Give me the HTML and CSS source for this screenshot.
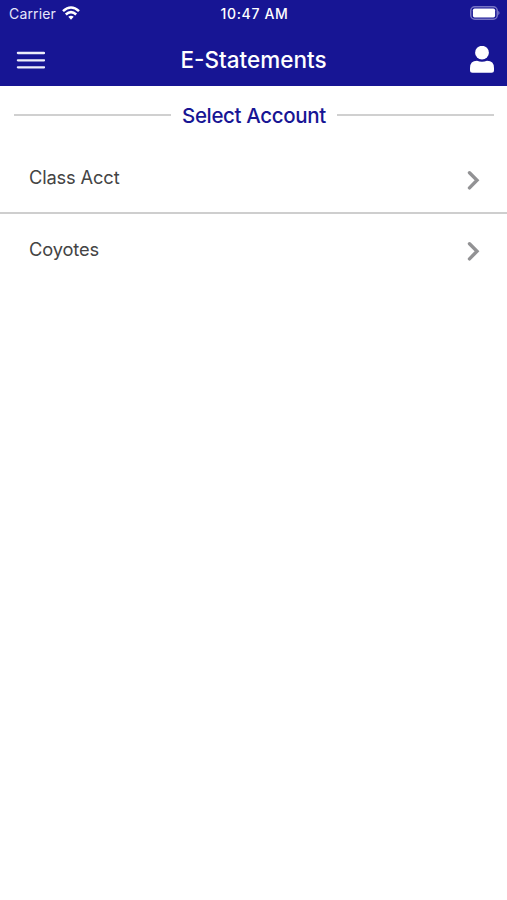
FILE: index.html
```html
<!DOCTYPE html>
<html lang="en">
<head>
<meta charset="utf-8">
<title>E-Statements</title>
<link rel="stylesheet" href="styles.css">
</head>
<body>
<header class="top">
  <div class="status">
    <div class="carrier"><span class="carrier-name">Carrier</span>
      <svg class="wifi" viewBox="0 0 18 14" width="18" height="14"><g fill="none" stroke="#fff" stroke-width="2.6"><path d="M1 5.1Q9-2.1 17 5.1"/><path d="M3.8 8.4Q9 3.9 14.2 8.4"/></g><path d="M6.3 10.8Q9 8.6 11.7 10.8L9 13.7Z" fill="#fff"/></svg>
    </div>
    <span class="time">10:47 AM</span>
    <svg class="battery" viewBox="0 0 30 14" width="30" height="14"><rect x=".75" y=".75" width="26.5" height="12.5" rx="4" fill="none" stroke="#7774c4" stroke-width="1.5"/><rect x="2.9" y="2.6" width="22.2" height="8.8" rx="1.7" fill="#fff"/><path d="M28.2 4.8q2.8 2.2 0 4.4z" fill="#7774c4"/></svg>
  </div>
  <nav class="bar">
    <svg class="menu" viewBox="0 0 29 18" width="29" height="18"><path d="M1.9 2H28M1.9 9.3H28M1.9 16.3H28" stroke="#ededfa" stroke-width="2.3" stroke-linecap="round"/></svg>
    <h1 class="title">E-Statements</h1>
    <svg class="user" viewBox="0 0 24 28" width="24" height="28"><circle cx="12" cy="6.7" r="6.9" fill="#fff"/><path d="M0 22Q0 14.8 7 14.8Q12 16.9 17 14.8Q24 14.8 24 22V24.2Q24 26.7 21.5 26.7H2.5Q0 26.7 0 24.2Z" fill="#fff"/></svg>
  </nav>
</header>
<main>
  <div class="section"><h2 class="section-title">Select Account</h2></div>
  <div class="row"><span class="name">Class Acct</span><svg class="chevron" viewBox="0 0 14 20" width="14" height="20"><path d="M2.5 2.7L10 10.3L2.5 17.9" fill="none" stroke="#929294" stroke-width="3.4" stroke-linecap="round"/></svg></div>
  <div class="row"><span class="name">Coyotes</span><svg class="chevron" viewBox="0 0 14 20" width="14" height="20"><path d="M2.5 2.7L10 10.3L2.5 17.9" fill="none" stroke="#929294" stroke-width="3.4" stroke-linecap="round"/></svg></div>
</main>
</body>
</html>
```
FILE: styles.css
```css
* { box-sizing: border-box; }
body { margin: 0; background: #fff; font-family: Inter, "Liberation Sans", sans-serif; }
svg { display: block; }
.top { height: 86px; background: #171594; color: #fff; }
.status { height: 26px; padding: 0 7px 0 9px; display: grid; grid-template-columns: 1fr auto 1fr; align-items: center; }
.carrier { display: flex; align-items: center; gap: 6px; font-size: 14px; letter-spacing: .15px; color: #e6e6fa; }
.time { font-size: 14px; font-weight: 500; letter-spacing: .65px; }
.battery { justify-self: end; }
.bar { height: 60px; padding: 8px 13px 0 16px; display: grid; grid-template-columns: 1fr auto 1fr; align-items: center; }
.title { margin: 0 3px 0 0; font-size: 22.5px; line-height: 28px; font-weight: 550; letter-spacing: 0; }
.user { justify-self: end; margin-top: -1px; }
.section { height: 56px; padding: 2px 13px 0 14px; display: flex; align-items: center; gap: 11px; }
.section::before, .section::after { content: ""; flex: 1; height: 2px; background: #d0d0d0; }
.section-title { margin: 0; font-size: 20.5px; line-height: 23px; font-weight: 450; letter-spacing: -.35px; color: #171594; }
.row { height: 71px; padding: 0 26px 0 29px; display: flex; align-items: center; justify-content: space-between; }
.row + .row { height: 72px; margin-top: -1px; border-top: 2px solid #cecece; }
.name { font-size: 18.3px; line-height: 22px; letter-spacing: -.15px; color: #444; }
.row:nth-child(2) .name { margin-top: -2px; }
.chevron { margin-top: 5px; }
.row + .row .chevron { margin-top: 3px; }
```
